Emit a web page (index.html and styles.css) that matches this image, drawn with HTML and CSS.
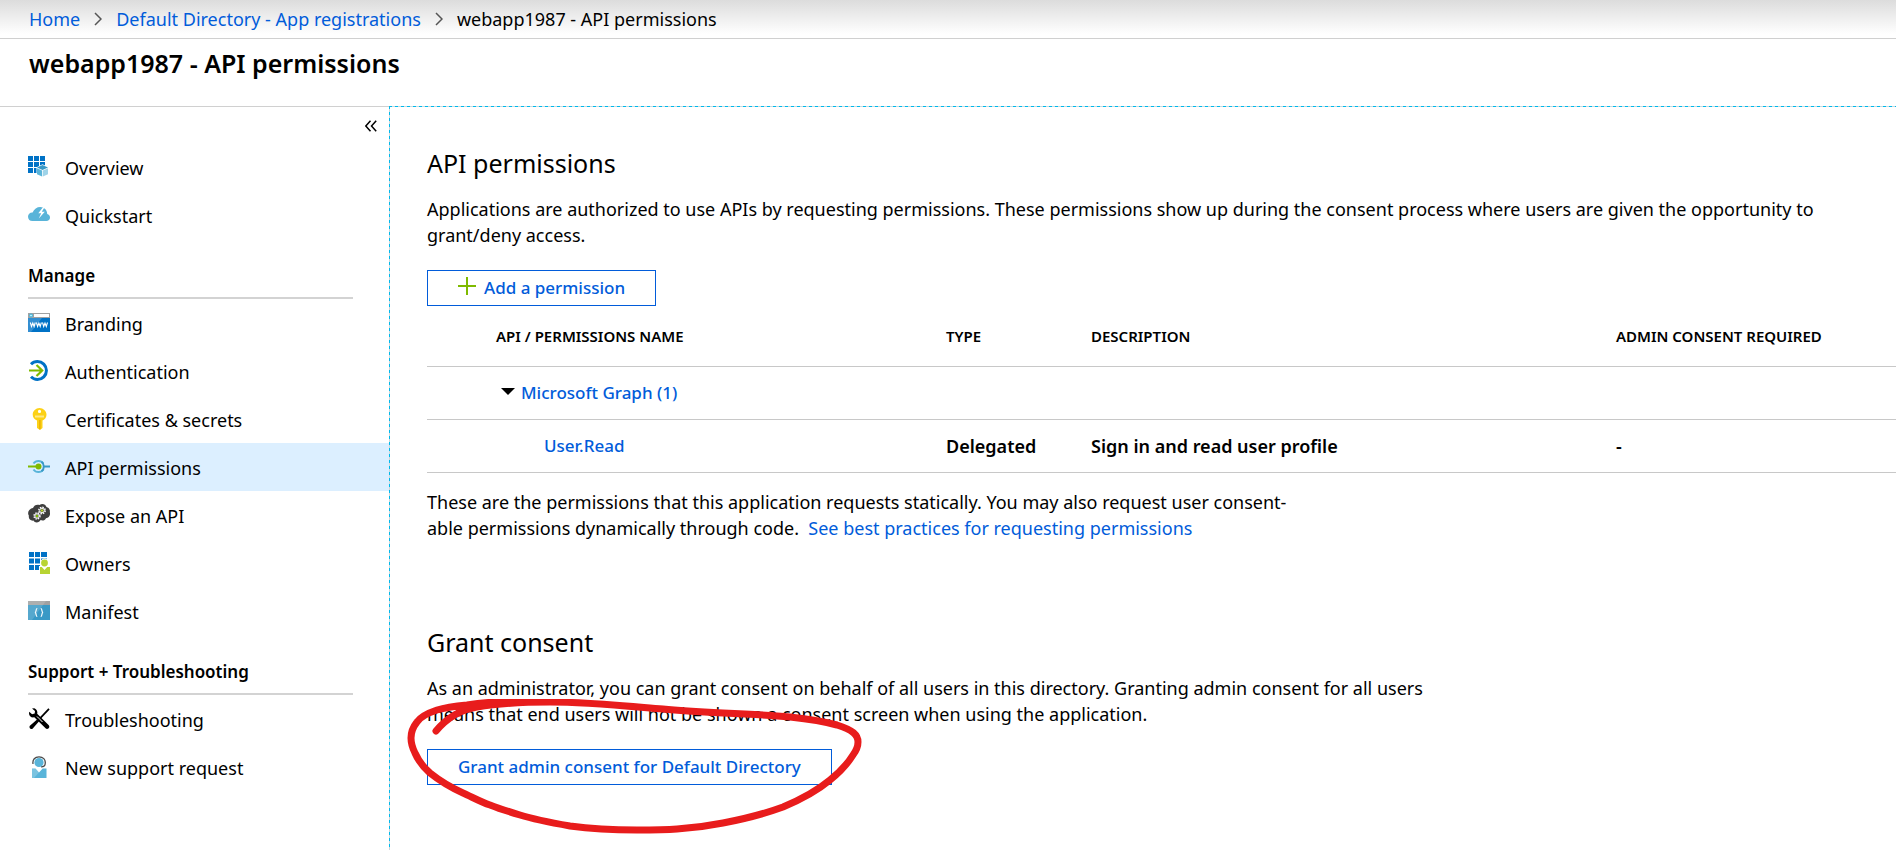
FILE: index.html
```html
<!DOCTYPE html>
<html lang="en">
<head>
<meta charset="utf-8">
<title>webapp1987 - API permissions</title>
<link rel="stylesheet" href="styles.css">
</head>
<body>
<nav class="crumbs" aria-label="Breadcrumb">
  <a href="#">Home</a>
  <svg class="chevron" viewBox="0 0 8 14" aria-hidden="true"><path d="M1 1l6 6-6 6"/></svg>
  <a href="#">Default Directory - App registrations</a>
  <svg class="chevron" viewBox="0 0 8 14" aria-hidden="true"><path d="M1 1l6 6-6 6"/></svg>
  <span>webapp1987 - API permissions</span>
</nav>
<header class="blade-header">
  <h1>webapp1987 - API permissions</h1>
</header>
<div class="blade">
  <aside class="sidebar">
    <button class="collapse" type="button" aria-label="Collapse menu">
      <svg viewBox="0 0 12 12" aria-hidden="true"><path d="M5.500 .7L.8 6l4.700 5.300M11.200 .7L6.500 6l4.700 5.300"/></svg>
    </button>
    <nav class="menu" aria-label="Resource menu">
      <a class="item" href="#">
        <svg class="icon" viewBox="0 0 22 22" aria-hidden="true"><path fill="#0072c6" d="M0 0h5v5H0zM6 0h5v5H6zM12 0h5v5h-5zM0 6h5v5H0zM6 6h5v5H6zM12 6h5v5h-5zM0 12h5v5H0zM6 12h5v5H6z"/><path fill="#fff" d="M8.500 11.300l6-3 6.200 3v7l-6.200 2.900-6-2.900z"/><path fill="#3999c6" d="M14.500 9l5.500 2.500-5.500 2.500L9 11.500z"/><path fill="#59b4d9" d="M9 12.200l5.100 2.400v6L9 18.200z"/><path fill="#9fd3e8" d="M20 12.200l-5.100 2.400v6l5.100-2.400z"/></svg>
        <span>Overview</span></a>
      <a class="item" href="#">
        <svg class="icon" viewBox="0 0 22 22" aria-hidden="true"><path fill="#59b4d9" d="M4.500 17A4.500 4.500 0 0 1 0 12.800c0-2.600 2-4.500 4.600-4.300C6 5 9 3 12.200 3c4 0 7 3 7 7 1.700.3 2.800 1.800 2.800 3.500 0 2-1.500 3.500-3.600 3.500z"/><path fill="#fff" d="M15.500 2.500l-5.200 6.700h2.900l-2.400 5.400 6-6.900h-3l3.200-5.200z"/></svg>
        <span>Quickstart</span></a>
      <h2 class="group">Manage</h2>
      <a class="item" href="#">
        <svg class="icon" viewBox="0 0 22 22" aria-hidden="true"><path fill="#a0a1a2" d="M0 1h22v5H0z"/><path fill="#fff" d="M6 2h15v3H6z"/><circle cx="3" cy="3.500" r="1.500" fill="#b9f0ff" stroke="#3ab6e0"/><path fill="#0072c6" d="M0 6h22v14H0z"/><path fill="#fff" opacity=".2" d="M0 6h14L3 20H0z"/><path fill="none" stroke="#fff" stroke-width="1.100" d="M2.300 10.500l1.200 4 1.300-3.500 1.300 3.500 1.200-4M8.400 10.500l1.200 4 1.300-3.500 1.300 3.500 1.200-4M14.500 10.500l1.200 4 1.300-3.500 1.300 3.500 1.200-4"/></svg>
        <span>Branding</span></a>
      <a class="item" href="#">
        <svg class="icon" viewBox="0 0 22 22" aria-hidden="true"><path fill="none" stroke="#0072c6" stroke-width="3" d="M3 4.200a9 9 0 1 1 0 12.600"/><path fill="none" stroke="#7fba00" stroke-width="2.200" d="M1 10.500h13M8.500 5L14.200 10.500l-5.700 5.500"/></svg>
        <span>Authentication</span></a>
      <a class="item" href="#">
        <svg class="icon" viewBox="0 0 22 22" aria-hidden="true"><path fill="#fcd116" fill-rule="evenodd" d="M11.500 0c3.700 0 7 3 7 6.600 0 2.800-1.500 4.900-4 6V20l-2.500 2L9 20V12.600c-2.600-1.100-4.300-3.200-4.300-6C4.700 3 7.800 0 11.500 0zm0 1.800a1.600 1.600 0 1 0 0 3.200 1.600 1.600 0 0 0 0-3.200z"/><path fill="#ffe985" d="M7 7.500h9v2H7z"/><path fill="#e5a900" d="M11.300 12h1.200v9l-1.200.6z"/></svg>
        <span>Certificates &amp; secrets</span></a>
      <a class="item active" href="#" aria-current="page">
        <svg class="icon" viewBox="0 0 22 22" aria-hidden="true"><path fill="none" stroke="#59b4d9" stroke-width="2" d="M5.500 7.500a6 6 0 0 1 9.900 0M5.500 13.500a6 6 0 0 0 9.900 0"/><path fill="none" stroke="#3999c6" stroke-width="2" d="M13.500 5.800a6 6 0 0 1 0 9.500M16.500 10.500H22"/><path stroke="#7fba00" stroke-width="2" d="M0 10.500h10"/><circle cx="10.500" cy="10.500" r="3" fill="#7fba00"/></svg>
        <span>API permissions</span></a>
      <a class="item" href="#">
        <svg class="icon" viewBox="0 0 22 22" aria-hidden="true"><path fill="#3e3e3e" d="M5 4C6 1 9 0 11.500 1 14-.8 17.500 0 18.500 3c2.300.6 3.900 2.800 3.300 5 .9 3-.8 6-3.800 6.200-1 2.300-3.600 2.800-5.400 1.800-1.200 3-5.800 3.400-7.200.6C2.300 17 .2 14.600.9 11.800-1 9 .6 4.800 5 4z"/><g fill="none" stroke="#fff"><circle cx="9" cy="12" r="3" stroke-width="1.400" stroke-dasharray="1.400 1"/><circle cx="14" cy="6.500" r="3.200" stroke-width="1.400" stroke-dasharray="1.500 1"/><circle cx="9" cy="12" r="2.100"/><circle cx="14" cy="6.500" r="2.300"/></g><circle cx="9" cy="12" r="1.200" fill="#7fba00"/><circle cx="14" cy="6.500" r="1.300" fill="#b8d432"/></svg>
        <span>Expose an API</span></a>
      <a class="item" href="#">
        <svg class="icon" viewBox="0 0 22 22" aria-hidden="true"><path fill="#0072c6" d="M1 0h5v5H1zM7 0h5v5H7zM13 0h6v5h-6zM1 6.500h5v5H1zM7 6.500h5v5H7zM13 6.500h6v5h-6zM1 13h5v5H1zM7 13h5v5H7z"/><circle cx="16.500" cy="10.800" r="4.200" fill="#fff"/><path fill="#fff" d="M11 14h11v8H11z"/><circle cx="16.500" cy="11" r="3.400" fill="#b8d432"/><path fill="#b8d432" d="M12 15h1.800l2.700 3 2.700-3H22v7H12z"/></svg>
        <span>Owners</span></a>
      <a class="item" href="#">
        <svg class="icon" viewBox="0 0 22 22" aria-hidden="true"><path fill="#a0a1a2" d="M0 1h22v4H0z"/><path fill="#3999c6" d="M0 5h22v15H0z"/><path fill="#fff" opacity=".15" d="M0 1h18L4 20H0z"/><path fill="none" stroke="#fff" stroke-width="1.200" d="M9.300 8.500C7.300 8.500 9 12 7 12.500c2 .5.300 4 2.300 4M12.700 8.500c2 0 .3 3.500 2.300 4-2 .5-.3 4-2.300 4"/></svg>
        <span>Manifest</span></a>
      <h2 class="group">Support + Troubleshooting</h2>
      <a class="item" href="#">
        <svg class="icon" viewBox="0 0 22 22" aria-hidden="true"><path d="M4 .5L6.300.2C8.700 1 9.800 3.400 9.200 5.700l11.600 11.500c1.300 1.600.1 4.300-2.700 3.600L6.300 9.300C3.500 10 1 8.300 1 5.200l.2-1.400 2.900 2.400 2.600-.8.300-2.500z"/><path stroke="#000" stroke-width="1.800" d="M21 .8l-8.500 9"/><path stroke="#fff" stroke-width="1" d="M9 8.500l5.500 5.500"/><path d="M10.200 10.500l1.800 1.800-7.500 8.400c-1.500 1.300-4-1-2.600-2.900z"/></svg>
        <span>Troubleshooting</span></a>
      <a class="item" href="#">
        <svg class="icon" viewBox="0 0 22 22" aria-hidden="true"><path fill="none" stroke="#4a4a4a" stroke-width="1.300" d="M5 8C4.300 3.500 7 .8 11 .8s6.800 2.700 6.200 6.700c0 2.500-1.700 3.300-4.200 3.300"/><circle cx="11" cy="6.500" r="4.600" fill="#59b4d9"/><path fill="#59b4d9" d="M4 12.500h3.500l3.500 4 3.700-4H18.500V22H4z"/><path fill="#fff" opacity=".2" d="M4 12.500h3.500l3.500 4L6 22H4z"/></svg>
        <span>New support request</span></a>
    </nav>
  </aside>
  <main class="content">
    <section>
      <h2 class="title">API permissions</h2>
      <p class="text">Applications are authorized to use APIs by requesting permissions. These permissions show up during the consent process where users are given the opportunity to grant/deny access.</p>
      <button class="btn" type="button"><svg class="plus" viewBox="0 0 18 18" aria-hidden="true"><path d="M0 9h18M9 0v18"/></svg>Add a permission</button>
      <table class="perms">
        <colgroup><col class="c-name"><col class="c-type"><col class="c-desc"><col></colgroup>
        <thead><tr><th scope="col">API / PERMISSIONS NAME</th><th scope="col">TYPE</th><th scope="col">DESCRIPTION</th><th scope="col">ADMIN CONSENT REQUIRED</th></tr></thead>
        <tbody>
          <tr><td colspan="4" class="api"><svg class="caret" viewBox="0 0 14 7" aria-hidden="true"><path d="M0 0h14L7 7z"/></svg><a href="#">Microsoft Graph (1)</a></td></tr>
          <tr><td class="perm"><a href="#">User.Read</a></td><td>Delegated</td><td>Sign in and read user profile</td><td>-</td></tr>
        </tbody>
      </table>
      <p class="text note">These are the permissions that this application requests statically. You may also request user consent-<br>able permissions dynamically through code.&nbsp; <a href="#">See best practices for requesting permissions</a></p>
    </section>
    <section class="grant">
      <h2 class="title">Grant consent</h2>
      <p class="text">As an administrator, you can grant consent on behalf of all users in this directory. Granting admin consent for all users<br>means that end users will not be shown a consent screen when using the application.</p>
      <button class="btn" type="button">Grant admin consent for Default Directory</button>
      <svg class="scribble" viewBox="0 0 460 140" aria-hidden="true"><path d="M30 32C40 20 52 11 71 8C95 4 120 3 144 3C180 3 220 7 257 10C277 12 297 13 317 14C340 15 362 16 384 18C402 20 420 23 431 26C447 31 452 36 452 43C452 48 450 52 447 56C442 64 434 73 424 81C412 91 396 100 377 108C358 115 338 120 317 124C302 127 287 129 271 130C258 131 244 131 231 131C208 131 186 130 164 127C147 124 130 121 114 116C104 113 94 110 84 106C75 103 66 98 57 94C46 89 34 82 24 74C16 67 12 61 9 54C6 48 5 44 5 39C5 33 7 28 11 23C15 17 22 14 31 11C41 8 51 7 61 6C73 4 85 3 97 3L144 3"/></svg>
    </section>
  </main>
</div>
</body>
</html>
```
FILE: styles.css
```css
* { box-sizing: border-box; }
body {
  margin: 0;
  min-height: 100vh;
  display: flex;
  flex-direction: column;
  background: #fff;
  color: #000;
  font-family: "Noto Sans", "Open Sans", sans-serif;
  font-size: 18px;
  line-height: 26px;
}
h1, h2, p { margin: 0; }
a { color: #015cda; text-decoration: none; }
button { font: inherit; cursor: pointer; }

.crumbs {
  display: flex;
  align-items: center;
  gap: 14px;
  height: 39px;
  padding: 0 29px;
  border-bottom: 1px solid #d0d0d0;
  background: linear-gradient(#dcdcdc, #fff 34px);
}
.chevron { width: 8px; height: 14px; fill: none; stroke: #555; stroke-width: 1.500; }

.blade-header {
  height: 68px;
  padding: 7px 29px;
  border-bottom: 1px solid #d0d0d0;
}
.blade-header h1 { font-size: 25px; font-weight: 600; line-height: 34px; }

.blade { flex: 1; display: flex; }
.sidebar { flex: 0 0 389px; }
.collapse {
  display: block;
  margin-left: auto;
  padding: 13px 12px 11px;
  border: 0;
  background: none;
  line-height: 0;
}
.collapse svg { width: 12px; height: 12px; fill: none; stroke: #000; stroke-width: 1.500; }
.item {
  display: flex;
  align-items: center;
  gap: 15px;
  height: 48px;
  padding-left: 28px;
  color: #000;
}
.item span { padding-top: 2px; }
.icon { width: 22px; height: 22px; }
.active { background: #dcefff; }
.group {
  height: 60px;
  margin: 0 36px 0 28px;
  padding-top: 24px;
  border-bottom: 2px solid #d3d3d3;
  font-size: 17px;
  font-weight: 600;
}

.content {
  flex: 1;
  min-width: 0;
  margin-top: -1px;
  padding: 40px 0 24px 38px;
  background:
    repeating-linear-gradient(90deg, #00b9ec 0 3px, #c8d8dd 3px 6px) top / 100% 1px no-repeat,
    repeating-linear-gradient(#00b9ec 0 3px, #c8d8dd 3px 6px) left / 1px 100% no-repeat;
}
.title { font-size: 25px; font-weight: 400; line-height: 34px; }
.text { margin-top: 16px; padding-right: 60px; }
.btn {
  display: inline-flex;
  align-items: center;
  height: 36px;
  margin-top: 22px;
  padding: 0 30px;
  border: 1px solid #015cda;
  background: none;
  color: #015cda;
  font-size: 17px;
  font-weight: 500;
}
.plus { width: 18px; height: 18px; margin: 0 8px 4px 0; stroke: #7fba00; stroke-width: 2; }

.perms { width: 100%; table-layout: fixed; border-collapse: collapse; }
.c-name { width: 519px; }
.c-type { width: 145px; }
.c-desc { width: 525px; }
.perms th, .perms td { padding: 0; border-bottom: 1px solid #c8c8c8; text-align: left; font-weight: 600; }
.perms th { height: 60px; font-size: 15px; }
.perms td { height: 53px; }
.perms a { font-size: 17px; font-weight: 500; }
.perms th:first-child { padding-left: 69px; }
.perms .api { padding-left: 74px; }
.perms .perm { padding-left: 117px; }
.caret { width: 14px; height: 7px; margin: 0 6px 4px 0; }

.grant { position: relative; margin-top: 84px; }
.scribble {
  position: absolute;
  left: -21px;
  top: 74px;
  width: 460px;
  height: 140px;
  fill: none;
  stroke: #e81c1c;
  stroke-width: 7;
  stroke-linecap: round;
  stroke-linejoin: round;
  pointer-events: none;
}
```
